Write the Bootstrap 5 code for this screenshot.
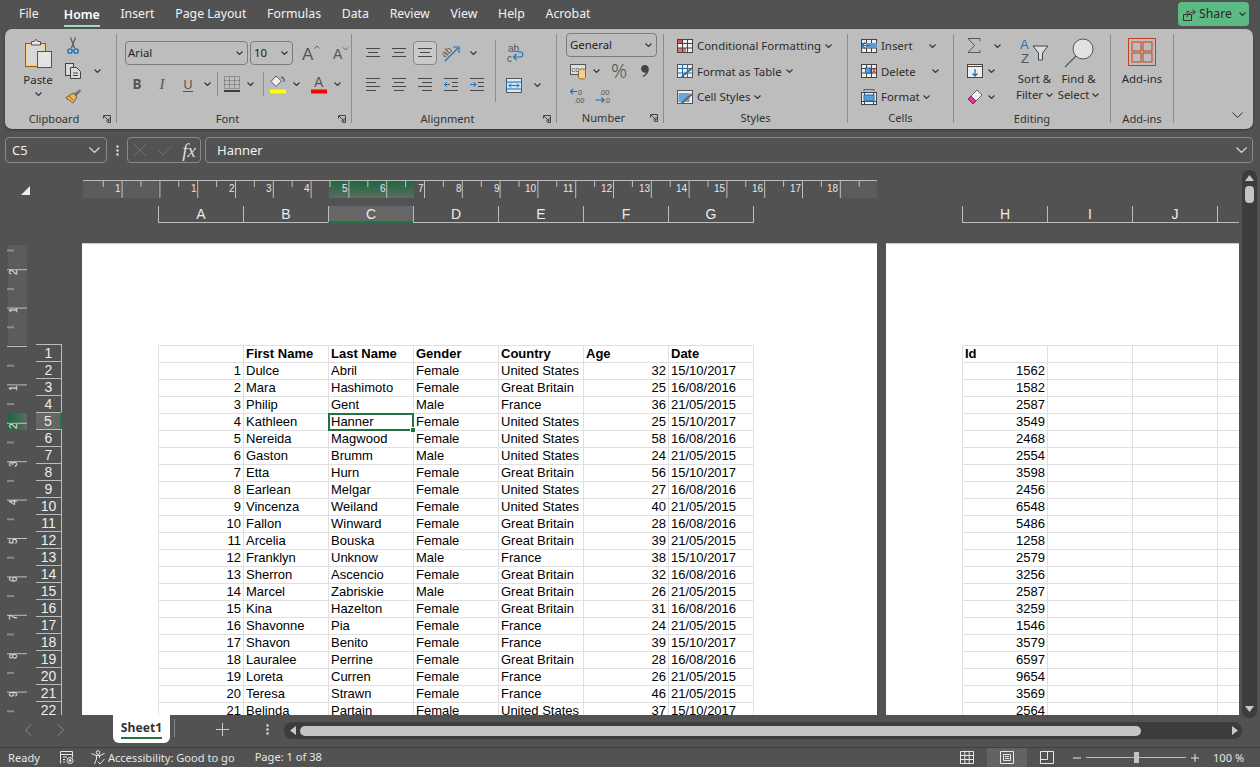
<!DOCTYPE html>
<html lang="en">
<head>
<meta charset="utf-8">
<title>Excel</title>
<link href="https://cdn.jsdelivr.net/npm/bootstrap@5.3.0/dist/css/bootstrap.min.css" rel="stylesheet">
<style>
html,body{width:1260px;height:767px;overflow:hidden;margin:0;background:#525252}
body{font-family:"Noto Sans",sans-serif;font-size:11.4px;color:#2b2b2b}
svg{display:block;flex:none;overflow:visible}
svg text{font-family:"Liberation Sans",sans-serif}
.chev{width:7px;height:4px;fill:none;stroke:#333;stroke-width:1.1}
.ln{fill:none;stroke:#484848;stroke-width:1}
/* tabs */
.tabs{height:29px;padding-left:19px;gap:20.7px;align-items:center;font-size:12.3px;color:#f2f2f2}
.tabs .nav-link{padding:0;color:#f2f2f2;height:29px;line-height:27px}
.tabs .nav-link.active{font-weight:600;color:#fff;border-bottom:2px solid #a2d9b8;height:26px;margin-top:-1px}
.tabs .tab-file{margin-right:4.5px}
.share{position:absolute;left:1178px;top:2px;width:71px;height:24px;background:#5dba84;border:0;border-radius:4px;color:#2a2a2a;font-size:12.3px;padding:0 0 0 5px;gap:3px;line-height:1}
/* ribbon */
.ribbon{margin:0 7px 0 5px;height:100px;background:#bdbdbd;border-radius:7px;padding-top:5px;box-shadow:0 1px 2px #333}
.rg{height:89px;border-right:1px solid #8c8c8c;flex:none}
.rbody{height:77px}
.rfoot{height:12px;line-height:16px;display:flex;font-size:11.1px;color:#333;white-space:nowrap}
.rfoot span{flex:1;text-align:center}
.launch{width:8px;height:8px;margin:4px 5px 0 0;fill:none;stroke:#444}
.g1{width:112px}.g2{width:235px}.g3{width:205px}.g4{width:107px}.g5{width:184px}.g6{width:106px}.g7{width:157px}.g8{width:63px}
.ic{display:flex;align-items:center;justify-content:center;height:100%;flex:none}
.w8{width:8px}.w9{width:9px}.w10{width:10px}.w12{width:12px}.w18{width:18px}.w24{width:24px}.w26{width:26px}.w27{width:27px}.w28{width:28px}.w34{width:34px}.w36{width:36px}
.r24{height:24px;display:flex}
.r25{height:25.5px;display:flex;align-items:center;white-space:nowrap}
.vsep{width:1px;height:24px;background:#8c8c8c;flex:none}
.combo{height:24px;border:1px solid #7c7c7c;border-radius:4px;display:flex;align-items:center;justify-content:space-between;padding:0 4px 0 2px;color:#222;flex:none}
.c-font{width:123px}.c-size{width:43px;margin-left:2px;padding-left:3px}
.c-num{width:91px;margin-top:-1px;padding-left:3px}
.paste{width:36px;margin-left:15px;padding-top:4px}
.paste span{margin-top:4px;line-height:16px}
.clipstack{margin-left:9px;width:32px;margin-top:-1px}
.g2 .rows,.g3 .rows{padding-top:7px}
.g3rows{padding-left:8px}
.r2{margin-top:7px}
.selbox{border:1px solid #868686;border-radius:4px;background:#c9c9c9;width:24px;margin:0 1px}
.glyph{font-family:"Liberation Serif",serif;font-size:15px;color:#555;font-style:italic}
.glyph-b{font-family:"Noto Sans",sans-serif;font-weight:700;font-size:13.5px;color:#555}
.glyph-u{font-family:"Noto Sans",sans-serif;font-size:13px;color:#555;border-bottom:1px solid #555;line-height:14px}
.wrapcol{margin-left:5px;height:62px;margin-top:6px;border-left:1px solid #8c8c8c;width:47px}
.wrapcol .top{height:31px;padding:4px 0 0 11px}
.wrapcol .bot{height:28px}
.num-body{padding-left:9px}
.num-row2{height:26px;margin-top:1px;align-items:center}
.pct-g{font-size:20px;color:#555;font-weight:300}
.stack{padding-left:13px;margin-top:-1px}
.stack svg:first-child{margin-right:4px}
.stack .chev{margin-left:4px}
.stack .chev.chev-a{margin-left:16.5px}
.stack .chev.chev-c{margin-left:3px}
.big{text-align:center;line-height:16px}
.bigicon{margin:0 auto}
.small3{width:46px;margin-left:13px;margin-top:-1px}
.ch13{margin-left:13px}.ch5{margin-left:5px}
.col-sort{width:43px;padding-top:4px}
.col-find{width:45px;padding-top:4px}
.col-sort .bigicon{margin-bottom:8px}
.col-find .bigicon{margin-bottom:3px}
.big .chev{display:inline-block;margin:0 0 2px 3px}
.col-add{padding-top:4px}
.col-add .bigicon{margin-bottom:5px}
.collapse-r{margin:78px 0 0 58px;width:11px;height:6px;fill:none;stroke:#333}
/* formula bar */
.fbar{height:26px;margin:8px 7px 0 5px;color:#f0f0f0;font-size:13px}
.fbox{height:26px;border:1px solid #8a8a8a;border-radius:4px;display:flex;align-items:center;flex:none}
.fbox span{padding-top:1px}
.namebox{width:102px;padding:0 6px;justify-content:space-between}
.dots{width:20px;color:#ddd}
.fx{width:74px;padding:0 4px 0 5px;justify-content:space-between;color:#ddd}
.fx i{font-family:"Liberation Serif",serif;font-size:19px;line-height:1;font-style:italic;font-weight:400}
.finput{flex:1;margin-left:4px;padding:0 5px 0 11px;justify-content:space-between}
.fchev{stroke:#ddd;fill:none;width:11px;height:6px;stroke-width:1.2}
/* sheet */
.sheet{height:552px;display:flex}
.smain{width:1242px;flex:none;overflow:hidden}
.rulerow{height:18px;margin-top:17px;display:flex}
.corner{width:9px;height:9px;margin:6px 53px 0 21px;fill:#eee}
.colrow{height:17px;margin:8px 0 20px 158px;display:flex;font-family:"Liberation Sans",sans-serif;font-size:14px;color:#ececec}
.ch{width:85px;flex:none;border-left:1px solid #bcbcbc;border-bottom:1px solid #bcbcbc;text-align:center;line-height:16px}
.ch.end{width:1px}
.ch.on{background:#666;border-bottom:2px solid #217346}
.ch.k{width:22px;border-left:1px solid #bcbcbc}
.gapH{width:208px;flex:none}
.sbody{height:472px;display:flex;overflow:hidden}
.gutter{width:82px;flex:none;display:flex}
.vruler{margin-left:7px}
.rowheads{margin-left:9px;width:26px;padding-top:101px;font-family:"Liberation Sans",sans-serif;font-size:14px;color:#ececec}
.rh{height:17px;border-top:1px solid #bcbcbc;border-right:1px solid #bcbcbc;text-align:center;line-height:17px}
.rh.on{background:#666;border-right:2px solid #217346}
.page{background:#fff;height:472px;padding:101px 0 0 76px;overflow:hidden;flex:none;color:#000;border-top:1px solid #c8c8c8}
.p1{width:795px}.p2{width:353px;margin-left:9px}
.sheet-table{--bs-table-bg:transparent;--bs-table-border-color:#e0e0e0;table-layout:fixed;width:596px;margin:0;font-family:"Liberation Sans",sans-serif;font-size:13px;line-height:15px;color:#000}
.sheet-table.t2{width:341px}
.sheet-table td,.sheet-table th{height:17px;padding:0 2px 1px 2px;overflow:visible;white-space:nowrap;color:#000;font-weight:400;vertical-align:bottom}
.sheet-table th{font-weight:700}
.sel{position:relative}
.sel::after{content:"";position:absolute;left:-1px;top:-1px;right:-1px;bottom:-1px;border:2px solid #217346}
.sel::before{content:"";position:absolute;right:-3px;bottom:-3px;width:6px;height:6px;background:#217346;border:1px solid #fff;z-index:1}
.vscroll{width:15px;margin:7px 3px -3px 0;background:#3c3c3c;border-radius:7px;position:relative;z-index:2;display:flex;flex-direction:column;align-items:center;padding-top:5px}
.vscroll .thumb{width:9px;height:17px;background:#c4c4c4;border-radius:4px;margin:5px 0 auto}
.vscroll svg{fill:#c8c8c8}
.vscroll svg:last-child{margin-bottom:6px}
/* tab row */
.tabrow{height:32px;position:relative}
.tabnav{width:113px;height:30px;color:#8c8c8c;padding-left:24px;gap:25px;flex:none}
.sheet-tab{width:57px;height:28px;background:#fff;border-radius:0 0 6px 6px;color:#333;font-weight:700;font-size:12.2px;text-align:center;line-height:26px;flex:none;position:relative}
.sheet-tab::after{content:"";position:absolute;left:8px;right:8px;bottom:4px;height:2px;background:#217346}
.tdiv{width:1px;height:18px;background:#888;margin:4px 0 0 4px}
.plus{width:13px;height:13px;margin:8px 0 0 41px;stroke:#ccc}
.kdots{margin:9px 0 0 37px;width:3px;fill:#ddd}
.hscroll{position:absolute;left:284px;top:7px;width:958px;height:17px;border-radius:8px;background:#3c3c3c;display:flex;align-items:center;padding:0 4px 0 6px}
.hscroll svg{fill:#c8c8c8}
.hscroll .thumb{height:10px;width:841px;background:#c4c4c4;border-radius:5px;margin-left:4px}
/* status */
.status{height:20px;border-top:1px solid #404040;color:#e6e6e6;font-size:11.1px;line-height:20px;position:relative;padding-left:8px;white-space:nowrap}
.status svg{stroke:#e6e6e6;fill:none}
.macro{margin-left:20px}
.acc{margin-left:17px;margin-right:3px}
.pageof{margin-left:20px;margin-top:-1px}
.sright{margin-left:auto;display:flex;align-items:center;height:19px}
.vw{width:40px;height:19px;display:flex;align-items:center;justify-content:center}
.vw.on{background:#636363}
.zoombar{width:100px;height:1px;background:#bdbdbd;margin:0 5px;position:relative}
.zoombar::after{content:"";position:absolute;left:48px;top:-5px;width:5px;height:11px;background:#c4c4c4}
.zm{width:8px;height:8px}
.zm-first{margin-left:6px}
.pct{margin:0 18px 0 14px;width:29px}
</style>
</head>
<body>
<svg class="d-none" aria-hidden="true">
<symbol id="chev" viewBox="0 0 7 4"><path d="M.5.5l3 3 3-3"/></symbol>
<symbol id="launch" viewBox="0 0 8 8"><path d="M.5 3.500v-3h7v7h-3M1 1l5 5M3 6h3V3"/></symbol>
</svg>

<nav class="nav tabs position-relative">
  <a class="nav-link tab-file" href="#">File</a>
  <a class="nav-link active" href="#">Home</a>
  <a class="nav-link" href="#">Insert</a>
  <a class="nav-link" href="#">Page Layout</a>
  <a class="nav-link" href="#">Formulas</a>
  <a class="nav-link" href="#">Data</a>
  <a class="nav-link" href="#">Review</a>
  <a class="nav-link" href="#">View</a>
  <a class="nav-link" href="#">Help</a>
  <a class="nav-link" href="#">Acrobat</a>
  <button class="btn share d-flex align-items-center" type="button">
    <svg width="13" height="13" viewBox="0 0 13 13" fill="none" stroke="#333"><path d="M4 5.500v-2h2M.5 6.500h8v6h-8zM4 9c.5-3 3-5 8-5M9.500 1.500 12.500 4 9.500 6.500"/></svg>
    <span>Share</span>
    <svg class="chev ms-1" viewBox="0 0 7 4"><use href="#chev"/></svg>
  </button>
</nav>

<section class="ribbon d-flex">
  <!-- Clipboard -->
  <div class="rg g1">
    <div class="rbody d-flex">
      <div class="paste d-flex flex-column align-items-center">
        <svg width="28" height="30" viewBox="0 0 28 30"><rect x="1.500" y="5.500" width="20" height="23" fill="#f6d28a" stroke="#7a6334"/><rect x="4" y="8" width="15" height="18" fill="#d8d8d8"/><path d="M7.500 5.500V3.500h3l1-2 1 0 1 2h3v3.500h-9z" fill="#e6e6e6" stroke="#555"/><rect x="13.500" y="13.500" width="14" height="16" fill="#e4e4e4" stroke="#555"/></svg>
        <span>Paste</span>
        <svg class="chev mt-1" viewBox="0 0 7 4"><use href="#chev"/></svg>
      </div>
      <div class="clipstack">
        <div class="r25">
          <svg width="16" height="17" viewBox="0 0 16 17" fill="none"><path d="M5.500.5 9.500 11M10.500.5 6.500 11" stroke="#5e5e5e" stroke-width="1.300"/><circle cx="5" cy="14" r="2.200" stroke="#1a6fb5" stroke-width="1.300"/><circle cx="11" cy="14" r="2.200" stroke="#1a6fb5" stroke-width="1.300"/></svg>
        </div>
        <div class="r25">
          <svg width="16" height="16" viewBox="0 0 16 16" fill="#d9d9d9" stroke="#444"><rect x=".5" y=".5" width="8" height="12"/><path d="M5.500 4.500h6l4 4v7h-10z"/><path d="M8 10h5M8 12.500h5"/></svg>
          <svg class="chev ch13" viewBox="0 0 7 4"><use href="#chev"/></svg>
        </div>
        <div class="r25">
          <svg width="16" height="16" viewBox="0 0 16 16"><path d="M9 5 15 .8l.8.8L11 7z" fill="#777" stroke="#555" stroke-width=".6"/><path d="M8 4 12 8 8 14 1 8.500z" fill="#e6b75d" stroke="#7a6334"/><path d="M1 8.500 3.500 11M4 7 8 11" stroke="#7a6334"/></svg>
        </div>
      </div>
    </div>
    <div class="rfoot"><span>Clipboard</span><svg class="launch" viewBox="0 0 8 8"><use href="#launch"/></svg></div>
  </div>

  <!-- Font -->
  <div class="rg g2">
    <div class="rbody rows ps-2">
      <div class="r24">
        <div class="combo c-font"><span>Arial</span><svg class="chev" viewBox="0 0 7 4"><use href="#chev"/></svg></div>
        <div class="combo c-size"><span>10</span><svg class="chev" viewBox="0 0 7 4"><use href="#chev"/></svg></div>
        <div class="ic w36"><svg width="18" height="16" viewBox="0 0 18 16"><text x="0" y="15" font-size="17" fill="#555">A</text><path d="M12.500 3.500l2.500-2.500 2.500 2.500" fill="none" stroke="#1a6fb5"/></svg></div>
        <div class="ic w24"><svg width="16" height="14" viewBox="0 0 16 14"><text x="0" y="13" font-size="14" fill="#555">A</text><path d="M10 1.500l2.500 2.500L15 1.500" fill="none" stroke="#1a6fb5"/></svg></div>
      </div>
      <div class="r24 r2">
        <div class="ic w24 glyph-b">B</div>
        <div class="ic w26 glyph">I</div>
        <div class="ic w26"><span class="glyph-u">U</span></div>
        <div class="ic w12"><svg class="chev" viewBox="0 0 7 4"><use href="#chev"/></svg></div>
        <div class="vsep ms-1"></div>
        <div class="ic w27"><svg width="16" height="16" viewBox="0 0 16 16" fill="none"><path d="M.5.500h15v12H.5zM5.500.500v12M10.500.500v12M.5 4.500h15M.5 8.500h15" stroke="#666" stroke-dasharray="1 1"/><path d="M0 15h16" stroke="#111" stroke-width="1.500"/></svg></div>
        <div class="ic w10"><svg class="chev" viewBox="0 0 7 4"><use href="#chev"/></svg></div>
        <div class="vsep ms-2"></div>
        <div class="ic w28"><svg width="16" height="19" viewBox="0 0 16 19"><path d="M6 1 1 6.500 6 11.500l5.500-5.500z" fill="#eee" stroke="#555"/><path d="M11 2c2.500.5 3.500 2.500 3 5" fill="none" stroke="#1a6fb5" stroke-width="1.300"/><rect y="14.500" width="16" height="4" fill="#ff0"/></svg></div>
        <div class="ic w9"><svg class="chev" viewBox="0 0 7 4"><use href="#chev"/></svg></div>
        <div class="ic w28 ms-1"><svg width="16" height="19" viewBox="0 0 16 19"><text x="3" y="12" font-size="14" fill="#555">A</text><rect y="14.500" width="16" height="4" fill="#f00"/></svg></div>
        <div class="ic w8"><svg class="chev" viewBox="0 0 7 4"><use href="#chev"/></svg></div>
      </div>
    </div>
    <div class="rfoot"><span>Font</span><svg class="launch" viewBox="0 0 8 8"><use href="#launch"/></svg></div>
  </div>

  <!-- Alignment -->
  <div class="rg g3">
    <div class="rbody d-flex">
      <div class="rows g3rows">
        <div class="r24">
          <div class="ic w26"><svg class="ln" width="14" height="10" viewBox="0 0 14 10"><path d="M0 .5h14M2 4.500h10M0 8.500h14"/></svg></div>
          <div class="ic w26"><svg class="ln" width="14" height="10" viewBox="0 0 14 10"><path d="M0 .5h14M2 4.500h10M0 8.500h14"/></svg></div>
          <div class="ic selbox"><svg class="ln" width="14" height="10" viewBox="0 0 14 10"><path d="M0 .5h14M2 4.500h10M0 8.500h14"/></svg></div>
          <div class="ic w26"><svg width="18" height="17" viewBox="0 0 18 17"><text x="0" y="10" font-size="9.500" fill="#555" transform="rotate(-40 5 8)">ab</text><path d="M3 16 16 3M11 2h6v6" fill="none" stroke="#1a6fb5" stroke-width="1.100"/></svg></div>
          <div class="ic w10 ms-1"><svg class="chev" viewBox="0 0 7 4"><use href="#chev"/></svg></div>
        </div>
        <div class="r24 r2">
          <div class="ic w26"><svg class="ln" width="14" height="13" viewBox="0 0 14 13"><path d="M0 .5h14M0 4.500h10M0 8.500h14M0 12.500h10"/></svg></div>
          <div class="ic w26"><svg class="ln" width="14" height="13" viewBox="0 0 14 13"><path d="M0 .5h14M2 4.500h10M0 8.500h14M2 12.500h10"/></svg></div>
          <div class="ic w26"><svg class="ln" width="14" height="13" viewBox="0 0 14 13"><path d="M0 .5h14M4 4.500h10M0 8.500h14M4 12.500h10"/></svg></div>
          <div class="ic w26"><svg class="ln" width="14" height="13" viewBox="0 0 14 13"><path d="M0 .5h14M8 4.500h6M8 8.500h6M0 12.500h14"/><path d="M6 6.500H0M3 4 .5 6.500 3 9" stroke="#1a6fb5"/></svg></div>
          <div class="ic w26"><svg class="ln" width="14" height="13" viewBox="0 0 14 13"><path d="M0 .5h14M8 4.500h6M8 8.500h6M0 12.500h14"/><path d="M0 6.500h6M3.500 4 6 6.500 3.500 9" stroke="#1a6fb5"/></svg></div>
        </div>
      </div>
      <div class="wrapcol">
        <div class="top d-flex align-items-start"><svg width="17" height="18" viewBox="0 0 17 18"><text x="1" y="8" font-size="10" fill="#555">ab</text><text x="0" y="18" font-size="10" fill="#555">c</text><path d="M11 8h3c2.500 0 2.500 5-.5 5H7M9.500 10l-3 3 3 3" fill="none" stroke="#1a6fb5" stroke-width="1.100"/></svg></div>
        <div class="bot d-flex align-items-center">
          <div class="ic w36"><svg width="16" height="15" viewBox="0 0 16 15"><rect x=".5" y=".5" width="15" height="14" fill="#ddeaf5" stroke="#555"/><rect x=".5" y="4" width="15" height="7" fill="#cfe2f3" stroke="#1a6fb5"/><path d="M3 7.500h10M5 5.500l-2 2 2 2M11 5.500l2 2-2 2" fill="none" stroke="#1a6fb5"/></svg></div>
          <div class="ic w10"><svg class="chev" viewBox="0 0 7 4"><use href="#chev"/></svg></div>
        </div>
      </div>
    </div>
    <div class="rfoot"><span>Alignment</span><svg class="launch" viewBox="0 0 8 8"><use href="#launch"/></svg></div>
  </div>

  <!-- Number -->
  <div class="rg g4">
    <div class="rbody num-body">
      <div class="combo c-num"><span>General</span><svg class="chev" viewBox="0 0 7 4"><use href="#chev"/></svg></div>
      <div class="r24 num-row2">
        <div class="ic w24"><svg width="16" height="15" viewBox="0 0 16 15"><rect x=".5" y=".5" width="15" height="10" fill="#ddd" stroke="#555"/><text x="1.500" y="8" font-size="7.500" fill="#555">cc</text><ellipse cx="12" cy="6.500" rx="3.500" ry="1.500" fill="#f0d090" stroke="#8a6a2e"/><path d="M8.500 6.500v7c0 2 7 2 7 0v-7" fill="#f0d090" stroke="#8a6a2e"/></svg></div>
        <div class="ic w12"><svg class="chev" viewBox="0 0 7 4"><use href="#chev"/></svg></div>
        <div class="ic w34 pct-g">%</div>
        <div class="ic w18"><svg width="8" height="12" viewBox="0 0 8 12" fill="#444"><path d="M4 0a3.800 3.800 0 0 1 3.800 4.200C7.800 7.500 5.500 10.500 2 12l-.5-.9C3.300 10 4.600 8.900 5 7.500 2.500 8.300 0 6.500 0 3.800A3.800 3.800 0 0 1 4 0z"/></svg></div>
      </div>
      <div class="r24">
        <div class="ic w24"><svg width="16" height="16" viewBox="0 0 16 16"><text x="8" y="7" font-size="7.500" fill="#555">0</text><text x="4" y="15" font-size="7.500" fill="#555">.00</text><path d="M7 3.500H.5M3 1 .5 3.500 3 6" fill="none" stroke="#1a6fb5" stroke-width="1.100"/></svg></div>
        <div class="ic w26"><svg width="16" height="16" viewBox="0 0 16 16"><text x="4" y="7" font-size="7.500" fill="#555">.00</text><text x="9" y="15" font-size="7.500" fill="#555">.0</text><path d="M.5 12H9M6.500 9.500 9 12l-2.500 2.500" fill="none" stroke="#1a6fb5" stroke-width="1.100"/></svg></div>
      </div>
    </div>
    <div class="rfoot"><span>Number</span><svg class="launch" viewBox="0 0 8 8"><use href="#launch"/></svg></div>
  </div>

  <!-- Styles -->
  <div class="rg g5">
    <div class="rbody stack">
      <div class="r25"><svg width="16" height="14" viewBox="0 0 16 14"><rect x=".5" y=".5" width="15" height="13" fill="#eee" stroke="#444"/><rect x="1" y="1" width="5" height="4" fill="#d9534f"/><rect x="1" y="9" width="8" height="4" fill="#e57373"/><path d="M5.500 0v14M10.500 0v14M0 4.500h16M0 9h16" stroke="#444"/></svg><span>Conditional Formatting</span><svg class="chev" viewBox="0 0 7 4"><use href="#chev"/></svg></div>
      <div class="r25"><svg width="16" height="14" viewBox="0 0 16 14"><rect x=".5" y=".5" width="15" height="13" fill="#eee" stroke="#555"/><path d="M5.500 0v14M10.500 0v14M0 4.500h16M0 9h16" stroke="#1a6fb5"/><path d="M15 4 7 11" stroke="#666" stroke-width="2"/><path d="M7 10 3 13.500l4 0z" fill="#1a6fb5"/></svg><span>Format as Table</span><svg class="chev" viewBox="0 0 7 4"><use href="#chev"/></svg></div>
      <div class="r25"><svg width="16" height="14" viewBox="0 0 16 14"><rect x=".5" y=".5" width="15" height="13" fill="#eee" stroke="#555"/><rect x="1.500" y="3" width="11" height="9" fill="#6aa5d8"/><path d="M15 4 7 11" stroke="#666" stroke-width="2"/><path d="M7 10 3 13.500l4 0z" fill="#1a6fb5"/></svg><span>Cell Styles</span><svg class="chev" viewBox="0 0 7 4"><use href="#chev"/></svg></div>
    </div>
    <div class="rfoot"><span>Styles</span></div>
  </div>

  <!-- Cells -->
  <div class="rg g6">
    <div class="rbody stack">
      <div class="r25"><svg width="16" height="14" viewBox="0 0 16 14"><rect x=".5" y=".5" width="15" height="13" fill="#eee" stroke="#444"/><path d="M5.500 0v14M10.500 0v14M0 4.500h16M0 9h16" stroke="#444"/><rect x="5" y="4" width="11" height="5" fill="#5b9bd5"/><path d="M9 6.500H1M4 3.500l-3 3 3 3" fill="none" stroke="#1a6fb5" stroke-width="1.200"/></svg><span>Insert</span><svg class="chev chev-a" viewBox="0 0 7 4"><use href="#chev"/></svg></div>
      <div class="r25"><svg width="16" height="14" viewBox="0 0 16 14"><rect x=".5" y=".5" width="15" height="13" fill="#eee" stroke="#444"/><path d="M5.500 0v14M10.500 0v14M0 4.500h16M0 9h16" stroke="#444"/><rect x="4.500" y="4" width="5" height="5" fill="#5b9bd5" stroke="#1a6fb5"/><path d="M11 4l4 5M15 4l-4 5" stroke="#c0392b" stroke-width="1.200"/></svg><span>Delete</span><svg class="chev chev-a" viewBox="0 0 7 4"><use href="#chev"/></svg></div>
      <div class="r25"><svg width="16" height="16" viewBox="0 0 16 16"><path d="M3 .5h10M3 0v2M13 0v2" stroke="#1a6fb5"/><rect x=".5" y="3.500" width="15" height="12" fill="#eee" stroke="#444"/><path d="M3.500 3v13M12.500 3v13M0 12.500h16" stroke="#444"/><rect x="3" y="6" width="10" height="6" fill="#5b9bd5" stroke="#1a6fb5"/></svg><span>Format</span><svg class="chev chev-c" viewBox="0 0 7 4"><use href="#chev"/></svg></div>
    </div>
    <div class="rfoot"><span>Cells</span></div>
  </div>

  <!-- Editing -->
  <div class="rg g7">
    <div class="rbody d-flex">
      <div class="small3">
        <div class="r25"><svg width="14" height="15" viewBox="0 0 14 15" fill="none" stroke="#555"><path d="M13 3V.5H1L7.500 7.500 1 14.500h12V12"/></svg><svg class="chev ch13" viewBox="0 0 7 4"><use href="#chev"/></svg></div>
        <div class="r25"><svg width="16" height="14" viewBox="0 0 16 14"><rect x=".5" y=".5" width="15" height="13" fill="#eee" stroke="#444"/><path d="M0 2.500h16" stroke="#444"/><path d="M8 5v7M5.500 9.500 8 12l2.500-2.500" fill="none" stroke="#1a6fb5" stroke-width="1.300"/></svg><svg class="chev ch5" viewBox="0 0 7 4"><use href="#chev"/></svg></div>
        <div class="r25"><svg width="16" height="16" viewBox="0 0 16 16"><path d="M10 1 15 6 9 12 4 7z" fill="#eee" stroke="#666"/><path d="M4 7 9 12 6 15 1 10z" fill="#d63e9e" stroke="#8a1f66"/></svg><svg class="chev ch5" viewBox="0 0 7 4"><use href="#chev"/></svg></div>
      </div>
      <div class="col-sort big">
        <svg class="bigicon" width="30" height="25" viewBox="0 0 30 25" fill="none"><text x="0" y="11" font-size="13" fill="#1a6fb5">A</text><text x="1" y="25" font-size="13" fill="#555">Z</text><path d="M13 8h15l-5.500 7v7h-4v-7z" fill="#ddd" stroke="#444"/></svg>
        <div>Sort &amp;</div>
        <div>Filter<svg class="chev" viewBox="0 0 7 4"><use href="#chev"/></svg></div>
      </div>
      <div class="col-find big">
        <svg class="bigicon" width="30" height="30" viewBox="0 0 30 30" fill="none"><circle cx="19" cy="11" r="10" fill="#e2e2e2" stroke="#555"/><path d="M12 18 1 29" stroke="#555" stroke-width="1.100"/></svg>
        <div>Find &amp;</div>
        <div>Select<svg class="chev" viewBox="0 0 7 4"><use href="#chev"/></svg></div>
      </div>
    </div>
    <div class="rfoot"><span>Editing</span></div>
  </div>

  <!-- Add-ins -->
  <div class="rg g8">
    <div class="rbody col-add big">
      <svg class="bigicon" width="28" height="28" viewBox="0 0 28 28" fill="none" stroke="#c43e1c"><rect x=".5" y=".5" width="27" height="27"/><rect x="4" y="4" width="9" height="9"/><rect x="15" y="4" width="9" height="9"/><rect x="4" y="15" width="9" height="9"/><rect x="15" y="15" width="9" height="9"/></svg>
      <div>Add-ins</div>
    </div>
    <div class="rfoot"><span>Add-ins</span></div>
  </div>
  <svg class="collapse-r" viewBox="0 0 11 6"><path d="M.5.500l5 5 5-5"/></svg>
</section>

<section class="fbar d-flex">
  <div class="fbox namebox"><span>C5</span><svg class="fchev" viewBox="0 0 11 6"><path d="M.5.500l5 5 5-5"/></svg></div>
  <div class="dots d-flex align-items-center justify-content-center"><svg width="3" height="11" viewBox="0 0 3 11" fill="#ddd"><circle cx="1.500" cy="1.500" r="1.200"/><circle cx="1.500" cy="5.500" r="1.200"/><circle cx="1.500" cy="9.500" r="1.200"/></svg></div>
  <div class="fbox fx">
    <svg width="14" height="14" viewBox="0 0 14 14" stroke="#6e6e6e" fill="none"><path d="M1 1l12 12M13 1 1 13"/></svg>
    <svg width="16" height="12" viewBox="0 0 16 12" stroke="#6e6e6e" fill="none"><path d="M1 6l5 5L15 1"/></svg>
    <i>fx</i>
  </div>
  <div class="fbox finput"><span>Hanner</span><svg class="fchev" viewBox="0 0 11 6"><path d="M.5.500l5 5 5-5"/></svg></div>
</section>

<main class="sheet">
  <div class="smain">
    <div class="rulerow">
      <svg class="corner" viewBox="0 0 9 9"><path d="M9 0v9H0z"/></svg>
      <svg width="794" height="18" viewBox="0 0 794 18">
        <defs>
          <pattern id="hr" x="38.600" width="37.800" height="18" patternUnits="userSpaceOnUse"><path d="M.5 0v18M19.400 0v7" stroke="#c0c0c0" fill="none"/></pattern>
          <linearGradient id="gh" x1="0" y1="0" x2="0" y2="1"><stop offset="0" stop-color="#17683d"/><stop offset="1" stop-color="#5c6b62"/></linearGradient>
          <linearGradient id="gv" x1="0" y1="0" x2="1" y2="0"><stop offset="0" stop-color="#17683d"/><stop offset="1" stop-color="#5c6b62"/></linearGradient>
        </defs>
        <rect width="75" height="18" fill="#5c5c5c"/><rect x="757" width="37" height="18" fill="#5c5c5c"/>
        <rect x="246" width="85" height="18" fill="url(#gh)"/>
        <rect x="3" width="788" height="18" fill="url(#hr)"/>
        <path d="M0 .5h794" stroke="#bdbdbd"/>
        <g font-size="10" fill="#e6e6e6">
          <text x="32" y="12">1</text><text x="108" y="12">1</text><text x="146" y="12">2</text><text x="183" y="12">3</text><text x="221" y="12">4</text><text x="259" y="12">5</text><text x="297" y="12">6</text><text x="335" y="12">7</text><text x="373" y="12">8</text><text x="411" y="12">9</text><text x="442" y="12">10</text><text x="480" y="12">11</text><text x="518" y="12">12</text><text x="556" y="12">13</text><text x="593" y="12">14</text><text x="631" y="12">15</text><text x="669" y="12">16</text><text x="707" y="12">17</text><text x="744" y="12">18</text>
        </g>
      </svg>
    </div>
    <div class="colrow">
      <div class="ch">A</div><div class="ch">B</div><div class="ch on">C</div><div class="ch">D</div><div class="ch">E</div><div class="ch">F</div><div class="ch">G</div><div class="ch end"></div>
      <div class="gapH"></div>
      <div class="ch">H</div><div class="ch">I</div><div class="ch">J</div><div class="ch k"></div>
    </div>
    <div class="sbody">
      <div class="gutter">
        <svg class="vruler" width="20" height="472" viewBox="0 0 20 472">
          <defs><pattern id="vr" y="64.600" width="20" height="38.400" patternUnits="userSpaceOnUse"><path d="M0 .5h20M0 19.700h7" stroke="#c0c0c0" fill="none"/></pattern></defs>
          <rect x="1" y="2" width="19" height="100" fill="#5c5c5c"/>
          <rect x="1" y="170" width="19" height="17" fill="url(#gv)"/>
          <rect width="20" height="472" fill="url(#vr)"/>
          <g font-size="10" fill="#e6e6e6">
            <text transform="translate(10,32) rotate(-90)">2</text>
            <text transform="translate(10,70) rotate(-90)">1</text>
            <text transform="translate(10,148) rotate(-90)">1</text>
            <text transform="translate(10,186) rotate(-90)">2</text>
            <text transform="translate(10,224) rotate(-90)">3</text>
            <text transform="translate(10,262) rotate(-90)">4</text>
            <text transform="translate(10,301) rotate(-90)">5</text>
            <text transform="translate(10,339) rotate(-90)">6</text>
            <text transform="translate(10,377) rotate(-90)">7</text>
            <text transform="translate(10,416) rotate(-90)">8</text>
            <text transform="translate(10,454) rotate(-90)">9</text>
          </g>
        </svg>
        <div class="rowheads">
          <div class="rh">1</div><div class="rh">2</div><div class="rh">3</div><div class="rh">4</div><div class="rh on">5</div><div class="rh">6</div><div class="rh">7</div><div class="rh">8</div><div class="rh">9</div><div class="rh">10</div><div class="rh">11</div><div class="rh">12</div><div class="rh">13</div><div class="rh">14</div><div class="rh">15</div><div class="rh">16</div><div class="rh">17</div><div class="rh">18</div><div class="rh">19</div><div class="rh">20</div><div class="rh">21</div><div class="rh">22</div>
        </div>
      </div>
      <div class="page p1">
        <table class="table table-bordered sheet-table">
          <thead><tr><th></th><th>First Name</th><th>Last Name</th><th>Gender</th><th>Country</th><th>Age</th><th>Date</th></tr></thead>
          <tbody>
            <tr><td class="text-end">1</td><td>Dulce</td><td>Abril</td><td>Female</td><td>United States</td><td class="text-end">32</td><td>15/10/2017</td></tr>
            <tr><td class="text-end">2</td><td>Mara</td><td>Hashimoto</td><td>Female</td><td>Great Britain</td><td class="text-end">25</td><td>16/08/2016</td></tr>
            <tr><td class="text-end">3</td><td>Philip</td><td>Gent</td><td>Male</td><td>France</td><td class="text-end">36</td><td>21/05/2015</td></tr>
            <tr><td class="text-end">4</td><td>Kathleen</td><td class="sel">Hanner</td><td>Female</td><td>United States</td><td class="text-end">25</td><td>15/10/2017</td></tr>
            <tr><td class="text-end">5</td><td>Nereida</td><td>Magwood</td><td>Female</td><td>United States</td><td class="text-end">58</td><td>16/08/2016</td></tr>
            <tr><td class="text-end">6</td><td>Gaston</td><td>Brumm</td><td>Male</td><td>United States</td><td class="text-end">24</td><td>21/05/2015</td></tr>
            <tr><td class="text-end">7</td><td>Etta</td><td>Hurn</td><td>Female</td><td>Great Britain</td><td class="text-end">56</td><td>15/10/2017</td></tr>
            <tr><td class="text-end">8</td><td>Earlean</td><td>Melgar</td><td>Female</td><td>United States</td><td class="text-end">27</td><td>16/08/2016</td></tr>
            <tr><td class="text-end">9</td><td>Vincenza</td><td>Weiland</td><td>Female</td><td>United States</td><td class="text-end">40</td><td>21/05/2015</td></tr>
            <tr><td class="text-end">10</td><td>Fallon</td><td>Winward</td><td>Female</td><td>Great Britain</td><td class="text-end">28</td><td>16/08/2016</td></tr>
            <tr><td class="text-end">11</td><td>Arcelia</td><td>Bouska</td><td>Female</td><td>Great Britain</td><td class="text-end">39</td><td>21/05/2015</td></tr>
            <tr><td class="text-end">12</td><td>Franklyn</td><td>Unknow</td><td>Male</td><td>France</td><td class="text-end">38</td><td>15/10/2017</td></tr>
            <tr><td class="text-end">13</td><td>Sherron</td><td>Ascencio</td><td>Female</td><td>Great Britain</td><td class="text-end">32</td><td>16/08/2016</td></tr>
            <tr><td class="text-end">14</td><td>Marcel</td><td>Zabriskie</td><td>Male</td><td>Great Britain</td><td class="text-end">26</td><td>21/05/2015</td></tr>
            <tr><td class="text-end">15</td><td>Kina</td><td>Hazelton</td><td>Female</td><td>Great Britain</td><td class="text-end">31</td><td>16/08/2016</td></tr>
            <tr><td class="text-end">16</td><td>Shavonne</td><td>Pia</td><td>Female</td><td>France</td><td class="text-end">24</td><td>21/05/2015</td></tr>
            <tr><td class="text-end">17</td><td>Shavon</td><td>Benito</td><td>Female</td><td>France</td><td class="text-end">39</td><td>15/10/2017</td></tr>
            <tr><td class="text-end">18</td><td>Lauralee</td><td>Perrine</td><td>Female</td><td>Great Britain</td><td class="text-end">28</td><td>16/08/2016</td></tr>
            <tr><td class="text-end">19</td><td>Loreta</td><td>Curren</td><td>Female</td><td>France</td><td class="text-end">26</td><td>21/05/2015</td></tr>
            <tr><td class="text-end">20</td><td>Teresa</td><td>Strawn</td><td>Female</td><td>France</td><td class="text-end">46</td><td>21/05/2015</td></tr>
            <tr><td class="text-end">21</td><td>Belinda</td><td>Partain</td><td>Female</td><td>United States</td><td class="text-end">37</td><td>15/10/2017</td></tr>
          </tbody>
        </table>
      </div>
      <div class="page p2">
        <table class="table table-bordered sheet-table t2">
          <thead><tr><th>Id</th><th></th><th></th><th></th></tr></thead>
          <tbody>
            <tr><td class="text-end">1562</td><td></td><td></td><td></td></tr>
            <tr><td class="text-end">1582</td><td></td><td></td><td></td></tr>
            <tr><td class="text-end">2587</td><td></td><td></td><td></td></tr>
            <tr><td class="text-end">3549</td><td></td><td></td><td></td></tr>
            <tr><td class="text-end">2468</td><td></td><td></td><td></td></tr>
            <tr><td class="text-end">2554</td><td></td><td></td><td></td></tr>
            <tr><td class="text-end">3598</td><td></td><td></td><td></td></tr>
            <tr><td class="text-end">2456</td><td></td><td></td><td></td></tr>
            <tr><td class="text-end">6548</td><td></td><td></td><td></td></tr>
            <tr><td class="text-end">5486</td><td></td><td></td><td></td></tr>
            <tr><td class="text-end">1258</td><td></td><td></td><td></td></tr>
            <tr><td class="text-end">2579</td><td></td><td></td><td></td></tr>
            <tr><td class="text-end">3256</td><td></td><td></td><td></td></tr>
            <tr><td class="text-end">2587</td><td></td><td></td><td></td></tr>
            <tr><td class="text-end">3259</td><td></td><td></td><td></td></tr>
            <tr><td class="text-end">1546</td><td></td><td></td><td></td></tr>
            <tr><td class="text-end">3579</td><td></td><td></td><td></td></tr>
            <tr><td class="text-end">6597</td><td></td><td></td><td></td></tr>
            <tr><td class="text-end">9654</td><td></td><td></td><td></td></tr>
            <tr><td class="text-end">3569</td><td></td><td></td><td></td></tr>
            <tr><td class="text-end">2564</td><td></td><td></td><td></td></tr>
          </tbody>
        </table>
      </div>
    </div>
  </div>
  <aside class="vscroll">
    <svg width="9" height="6" viewBox="0 0 9 6"><path d="M4.500 0 9 6H0z"/></svg>
    <div class="thumb"></div>
    <svg width="9" height="6" viewBox="0 0 9 6"><path d="M4.500 6 9 0H0z"/></svg>
  </aside>
</main>

<section class="tabrow d-flex">
  <div class="tabnav d-flex align-items-center">
    <svg width="8" height="12" viewBox="0 0 8 12" fill="none" stroke="#8c8c8c"><path d="M7 .5 1.500 6 7 11.500"/></svg>
    <svg width="8" height="12" viewBox="0 0 8 12" fill="none" stroke="#8c8c8c"><path d="M1 .5 6.500 6 1 11.500"/></svg>
  </div>
  <div class="sheet-tab">Sheet1</div>
  <div class="tdiv"></div>
  <svg class="plus" viewBox="0 0 13 13"><path d="M6.500 0v13M0 6.500h13"/></svg>
  <svg class="kdots" height="11" viewBox="0 0 3 11"><circle cx="1.500" cy="1.500" r="1.200"/><circle cx="1.500" cy="5.500" r="1.200"/><circle cx="1.500" cy="9.500" r="1.200"/></svg>
  <div class="hscroll">
    <svg width="6" height="9" viewBox="0 0 6 9"><path d="M0 4.500 6 0v9z"/></svg>
    <div class="thumb"></div>
    <svg class="ms-auto" width="6" height="9" viewBox="0 0 6 9"><path d="M6 4.500 0 0v9z"/></svg>
  </div>
</section>

<footer class="status d-flex align-items-center">
  <span>Ready</span>
  <svg class="macro" width="14" height="13" viewBox="0 0 14 13"><path d="M.5 12.500V.5h12v6M0 3.500h13M3 6h4M3 8.500h2M3 11h2"/><circle cx="10" cy="9.500" r="3"/><circle cx="10" cy="9.500" r="1" fill="#e6e6e6"/></svg>
  <svg class="acc" width="14" height="15" viewBox="0 0 14 15"><circle cx="7" cy="2.500" r="1.800"/><path d="M.5 3.500 5 5.500h4l4.500-2M5.500 6v3L3.500 14M8.500 6v2"/><path d="M7 12l2 2 4.500-5" stroke-width="1"/></svg>
  <span>Accessibility: Good to go</span>
  <span class="pageof">Page: 1 of 38</span>
  <div class="sright">
    <div class="vw"><svg width="14" height="13" viewBox="0 0 14 13"><path d="M.5.500h13v12H.5zM.5 4.500h13M.5 8.500h13M4.800.500v12M9.200.500v12"/></svg></div>
    <div class="vw on"><svg width="14" height="13" viewBox="0 0 14 13"><path d="M.5.500h13v12H.5zM3.500 3.500h7v6h-7zM5 5.500h4M5 7.500h4"/></svg></div>
    <div class="vw"><svg width="14" height="13" viewBox="0 0 14 13"><path d="M.5.500h13v12H.5zM.5 8.500h7v-8"/></svg></div>
    <svg class="zm zm-first" viewBox="0 0 8 8"><path d="M0 4h8"/></svg>
    <div class="zoombar"></div>
    <svg class="zm" viewBox="0 0 8 8"><path d="M0 4h8M4 0v8"/></svg>
    <span class="pct">100 %</span>
  </div>
</footer>

<script src="https://cdn.jsdelivr.net/npm/bootstrap@5.3.0/dist/js/bootstrap.bundle.min.js"></script>
</body>
</html>
